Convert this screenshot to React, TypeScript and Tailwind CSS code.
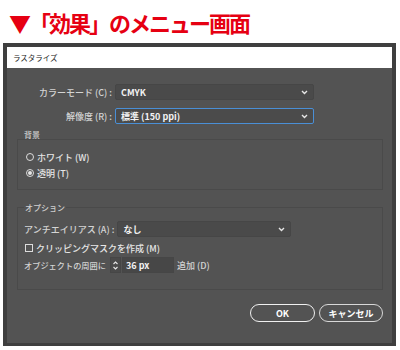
import React from 'react';

const font = { fontFamily: '"Noto Sans CJK JP", "Noto Sans", sans-serif' };

const Chevron = () => (
  <svg width="7" height="5" viewBox="0 0 7 5" className="shrink-0">
    <polyline points="1,1 3.5,3.5 6,1" fill="none" stroke="#e6e6e6" strokeWidth="1.4" />
  </svg>
);

const Select = ({ value, active, width }: { value: string; active?: boolean; width: string }) => (
  <div
    className={`${width} h-[16px] flex items-center justify-between pl-[5px] pr-[5px] rounded-[2px] border ${
      active ? 'border-[#4a8fd6] bg-[#4b4b4b]' : 'border-[#464646] bg-[#4a4a4a]'
    }`}
  >
    <span className="text-[9px] leading-none font-bold text-[#f2f2f2]">{value}</span>
    <Chevron />
  </div>
);

export default function App() {
  return (
    <div className="w-[400px] h-[350px] bg-white overflow-hidden" style={font}>
      {/* heading */}
      <div className="h-[43px] pt-[11px] pl-[9px]">
        <div className="text-[22px] leading-[22px] font-bold tracking-[-2px] text-[#e60012] whitespace-nowrap">
          ▼「効果」のメニュー画面
        </div>
      </div>

      {/* dialog */}
      <div className="ml-[3px] w-[393px] bg-[#3f3f3f] p-[4px] pb-[3px]">
        <div className="h-[21px] bg-white flex items-center pl-[6px]">
          <span className="text-[7.5px] leading-none text-[#222]">ラスタライズ</span>
        </div>

        <div className="h-[275px] bg-[#535353] pt-[16px] text-[#d4d4d4]">
          <div className="flex items-center h-[16px]">
            <div className="w-[105px] text-right text-[9px] leading-none font-medium">カラーモード (C) :</div>
            <div className="ml-[3px]">
              <Select value="CMYK" width="w-[199px]" />
            </div>
          </div>
          <div className="flex items-center h-[16px] mt-[8px]">
            <div className="w-[105px] text-right text-[9px] leading-none font-medium">解像度 (R) :</div>
            <div className="ml-[3px]">
              <Select value="標準 (150 ppi)" active width="w-[199px]" />
            </div>
          </div>

          {/* background */}
          <div className="ml-[10px] w-[366px]">
            <div className="mt-[7px] h-[8px] pl-[7px] text-[8px] leading-[8px] font-medium text-[#cfcfcf]">背景</div>
            <div className="h-[51px] border border-[#4a4a4a] pt-[10px] pl-[8px]">
              <div className="flex items-center h-[14px] gap-[3px]">
                <span className="w-[8px] h-[8px] rounded-full border border-[#dcdcdc]" />
                <span className="text-[9px] leading-none font-medium text-[#e6e6e6]">ホワイト (W)</span>
              </div>
              <div className="flex items-center h-[14px] gap-[3px] mt-[2px]">
                <span className="w-[8px] h-[8px] rounded-full border border-[#dcdcdc] flex items-center justify-center">
                  <span className="w-[4px] h-[4px] rounded-full bg-[#e6e6e6]" />
                </span>
                <span className="text-[9px] leading-none font-medium text-[#e6e6e6]">透明 (T)</span>
              </div>
            </div>
          </div>

          {/* options */}
          <fieldset className="mt-[13px] ml-[10px] w-[366px] h-[87px] border border-[#4a4a4a] pl-[6px]">
            <legend className="text-[8px] leading-[9px] font-medium text-[#cfcfcf] px-[1px]">オプション</legend>
            <div className="flex items-center h-[16px] mt-[9px]">
              <span className="text-[9px] leading-none font-medium whitespace-nowrap">アンチエイリアス (A) :</span>
              <div className="ml-[3px]">
                <Select value="なし" width="w-[174px]" />
              </div>
            </div>
            <div className="flex items-center h-[14px] mt-[4px] gap-[3px] pl-[1px]">
              <span className="w-[8px] h-[8px] border border-[#dcdcdc]" />
              <span className="text-[9px] leading-none font-medium text-[#e6e6e6]">クリッピングマスクを作成 (M)</span>
            </div>
            <div className="flex items-center h-[16px] mt-[2px]">
              <span className="w-[86px] shrink-0 text-[8.2px] leading-none font-medium whitespace-nowrap">
                オブジェクトの周囲に
              </span>
              <div className="flex h-[16px]">
                <div className="w-[11px] h-full bg-[#4a4a4a] border border-[#464646] flex items-center justify-center">
                  <svg width="7" height="11" viewBox="0 0 7 11">
                    <polyline points="1.5,4 3.5,2 5.5,4" fill="none" stroke="#e6e6e6" strokeWidth="1.1" />
                    <polyline points="1.5,7 3.5,9 5.5,7" fill="none" stroke="#e6e6e6" strokeWidth="1.1" />
                  </svg>
                </div>
                <div className="ml-[1px] w-[52px] h-full bg-[#474747] border border-[#464646] flex items-center pl-[3px]">
                  <span className="text-[9px] leading-none font-bold text-[#f2f2f2]">36 px</span>
                </div>
              </div>
              <span className="ml-[3px] text-[9px] leading-none font-medium">追加 (D)</span>
            </div>
          </fieldset>

          {/* buttons */}
          <div className="flex justify-end gap-[4px] mt-[14px] pr-[9px]">
            <button className="w-[65px] h-[18px] rounded-full border-[1.5px] border-[#f0f0f0] text-[9px] leading-none font-bold text-white">
              OK
            </button>
            <button className="w-[64px] h-[18px] rounded-full border-[1.5px] border-[#d8d8d8] text-[9px] leading-none font-bold text-white">
              キャンセル
            </button>
          </div>
        </div>
      </div>
    </div>
  );
}
